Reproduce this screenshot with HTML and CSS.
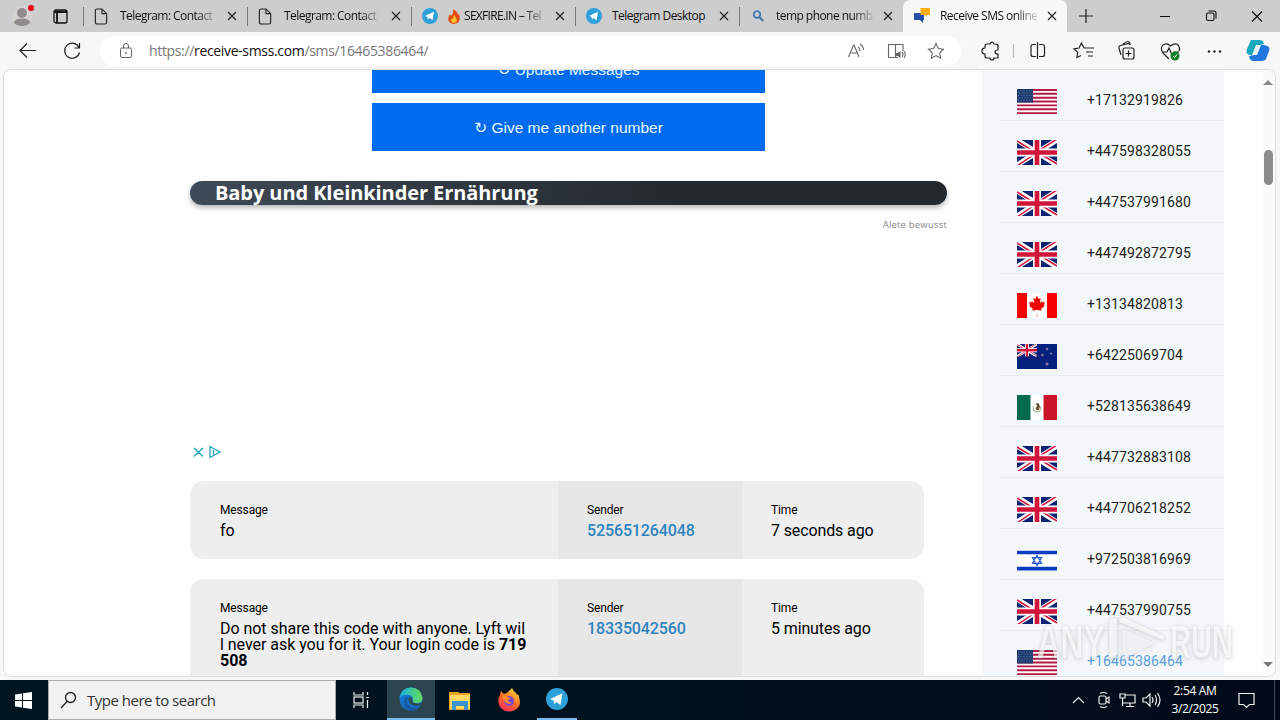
FILE: index.html
```html
<!DOCTYPE html>
<html lang="en">
<head>
<meta charset="utf-8">
<title>Receive SMS online</title>
<link rel="stylesheet" href="styles.css">
</head>
<body>
<svg class="defs" aria-hidden="true">
  <symbol id="x" viewBox="0 0 10 10"><path d="M1 1l8 8M9 1l-8 8" fill="none" stroke="#222" stroke-width="1.2"/></symbol>
  <symbol id="doc" viewBox="0 0 14 18"><path d="M1 3q0-2 2-2h5l5 5v9q0 2-2 2H3q-2 0-2-2zM8 1v5h5" fill="none" stroke="#222" stroke-width="1.2"/></symbol>
  <symbol id="tg" viewBox="0 0 16 16"><circle cx="8" cy="8" r="8" fill="#2da0da"/><path d="M3 8l9-4.2-1.500 8.500-3-2.200-1.600 1.500-.4-2.600z" fill="#fff"/></symbol>
  <symbol id="uk" viewBox="0 0 40 25" preserveAspectRatio="none"><path fill="#0a2472" d="M0 0h40v25H0z"/><path d="M0 0l40 25M40 0L0 25" stroke="#fff" stroke-width="5"/><path d="M0 1l17 10.500M40-1L22 10.500M0 26l17-11.500M40 24L23 13.500" stroke="#d0143a" stroke-width="1.500"/><path d="M20 0v25M0 12.500h40" stroke="#fff" stroke-width="8"/><path d="M20 0v25M0 12.500h40" stroke="#d0143a" stroke-width="4.700"/></symbol>
  <symbol id="us" viewBox="0 0 40 25"><path fill="#fff" d="M0 0h40v25H0z"/><path d="M0 1h40M0 4.800h40M0 8.700h40M0 12.500h40M0 16.400h40M0 20.200h40M0 24.100h40" stroke="#b31942" stroke-width="1.900"/><path fill="#1d3a70" d="M0 0h16v13.500H0z"/><path d="M1 2h14M2 4.300h14M1 6.600h14M2 8.900h14M1 11.200h14" stroke="#7d92bb" stroke-width=".8" stroke-dasharray="1 1.700"/></symbol>
  <symbol id="ca" viewBox="0 0 40 25"><path fill="#fff" d="M0 0h40v25H0z"/><path fill="#f50000" d="M0 0h10v25H0zM30 0h10v25H30zM20 3l1.800 3 1.800-1-.7 5.200 2.300-2.300.5 1.500 2.300-.4-1 3 .8.800-3.600 3 .3 1.900-3.900-.6h-1.200l-3.900.6.3-1.900-3.600-3 .8-.8-1-3 2.300.4.5-1.500 2.300 2.300-.7-5.200 1.800 1z"/><path d="M20 21v3" stroke="#e99"/></symbol>
  <symbol id="nz" viewBox="0 0 40 25"><path fill="#04207d" d="M0 0h40v25H0z"/><use href="#uk" width="20" height="12.500"/><g fill="#a84a78" stroke="#8f9bd0" stroke-width=".6"><circle cx="30" cy="5" r="1"/><circle cx="25.500" cy="11" r="1"/><circle cx="34" cy="9.500" r=".8"/><circle cx="30" cy="20" r="1.200"/></g></symbol>
  <symbol id="mx" viewBox="0 0 40 25"><path fill="#fff" d="M0 0h40v25H0z"/><path fill="#006b4d" d="M0 0h13.500v25H0z"/><path fill="#cc1428" d="M26.500 0H40v25H26.500z"/><path d="M16.500 11.500a3.800 3.800 0 1 0 7 0" fill="none" stroke="#a9b897" stroke-width="1.200"/><path d="M19 8.500l2.500-.5 1.500 3.500-1.200 3.500h-2.300l-1-2 1.500-1.500z" fill="#665031"/></symbol>
  <symbol id="il" viewBox="0 0 40 25"><path fill="#fff" d="M0 2h40v21H0z"/><path d="M0 4.500h40M0 20.700h40" stroke="#0d3cc0" stroke-width="3.700"/><path d="M20 7.500l4.600 7.800h-9.200zM20 17.500l4.600-7.800h-9.200z" fill="none" stroke="#2459c8" stroke-width="1.200"/></symbol>
</svg>

<div class="tabs">
  <div class="tabs-lead">
    <svg width="24" height="24" viewBox="0 0 24 24"><circle cx="10" cy="12" r="10" fill="#d5d2cf"/><circle cx="10" cy="9" r="5" fill="#8f8c8a"/><path d="M2 19q0-4.500 8-4.500t8 4.500q-3 3-8 3t-8-3z" fill="#8f8c8a"/><circle cx="19" cy="4" r="3" fill="#e3000f"/></svg>
    <svg width="15" height="15" viewBox="0 0 15 15"><rect x="1" y="1" width="13" height="13" rx="2" fill="none" stroke="#111" stroke-width="1.300"/><path d="M1 3h13M4 3v11" stroke="#111" stroke-width="1.800"/></svg>
  </div>
  <div class="tab"><svg class="fav doc"><use href="#doc"/></svg><span class="fade">Telegram: Contact</span><svg class="close"><use href="#x"/></svg></div>
  <div class="tab"><svg class="fav doc"><use href="#doc"/></svg><span class="fade">Telegram: Contact</span><svg class="close"><use href="#x"/></svg></div>
  <div class="tab"><svg class="fav"><use href="#tg"/></svg><span class="fade fire"><svg width="12" height="15" viewBox="0 0 12 15"><path d="M5 0q5 3 5 6l1-1q3 9-5 10Q-1 14 .5 8L2 5l1 2q3-3 2-7z" fill="#e64b12"/><path d="M6 6q3 3 3 6-3 4-6 0 0-2 1-3l1 1z" fill="#ffc529"/></svg>SEXFIRE.IN – Tel</span><svg class="close"><use href="#x"/></svg></div>
  <div class="tab"><svg class="fav"><use href="#tg"/></svg><span>Telegram Desktop</span><svg class="close"><use href="#x"/></svg></div>
  <div class="tab"><svg class="fav" viewBox="0 0 16 16"><circle cx="7" cy="6.500" r="3.300" fill="none" stroke="#3c76b4" stroke-width="1.700"/><path d="M9.300 9l4 4" stroke="#3c76b4" stroke-width="2"/></svg><span class="fade">temp phone numb</span><svg class="close"><use href="#x"/></svg></div>
  <div class="tab active"><svg class="fav" viewBox="0 0 16 16"><path d="M0 5h10v7H9v3l-3-3H0z" fill="#2450a8"/><path d="M6.500 0H16v7h-3v2l-2-2H6.500z" fill="#ffad0b"/></svg><span class="fade">Receive SMS online</span><svg class="close"><use href="#x"/></svg></div>
  <svg class="plus" viewBox="0 0 14 14"><path d="M7 0v14M0 7h14" stroke="#222" stroke-width="1.200"/></svg>
  <svg class="wctl" viewBox="0 0 104 12"><path d="M0 6.500h10M92 1.500l10 10M102 1.500l-10 10" stroke="#111" stroke-width="1.100" fill="none"/><g fill="none" stroke="#111" stroke-width="1.100"><rect x="46.500" y="3" width="7.500" height="7.500" rx="1.500"/><path d="M48.500 1h5.500q2 0 2 2v5.500"/></g></svg>
</div>

<div class="toolbar">
  <svg class="nav" width="66" height="20" viewBox="0 0 66 20"><g fill="none" stroke="#222" stroke-width="1.200"><path d="M17 9.500H1.500M8 2.500l-7 7 7 7"/><path d="M60 6.500a7.500 7.500 0 1 0 .5 5M60.500 2v5h-5"/></g></svg>
  <div class="address">
    <svg width="14" height="18" viewBox="0 0 14 18"><g fill="none" stroke="#666"><rect x="1.500" y="6" width="11" height="9.500" rx="1.500"/><path d="M4.500 6V4a2.500 2.500 0 0 1 5 0v2"/></g><circle cx="7" cy="11" r=".9" fill="#666"/></svg>
    <span class="url">https://<b>receive-smss.com</b>/sms/16465386464/</span>
    <svg width="96" height="18" viewBox="0 0 96 18"><g fill="none" stroke="#666" stroke-width="1.100"><path d="M.5 15L5.500 3h.5l5 12M2.500 11h7M10 5q2 1 2 4M12 2q3.500 2 3.500 6"/><path d="M47.500 16V2.500h-7v13H50M47.500 2.500h7.500V9"/><path d="M54 10q2 2 0 5M56 9q2.500 3 0 7"/><path d="M88 1.500l2.400 5 5.100.700-3.800 3.700 1 5.300-4.700-2.600-4.700 2.600 1-5.300-3.800-3.700 5.100-.700z"/></g><path d="M47.500 11h2l3-2v7l-3-2h-2z" fill="#666"/></svg>
  </div>
  <svg class="tools" width="300" height="28" viewBox="0 0 300 28"><g fill="none" stroke="#222" stroke-width="1.200">
    <path d="M17 8q-1-1-4-1-1-3-3.500-1-.8.500-.5 1H6q-2 0-2 2v2q-3 0-3 3t3 3v2q0 2 2 2h3q0 2 2 2t2-2h4v-4q-3 0-3-2t3-2z" transform="translate(1 0)"/>
    <path d="M33.500 7v14" stroke="#bbb"/><path d="M56 7.500h-3q-2 0-2 2v8q0 2 2 2h3M59 7.500h3.500q2 0 2 2v8q0 2-2 2H59M57.500 5v17"/>
    <path d="M108 11h-3l-2.500-5-2.500 5-5 .8 3.700 3.600-.8 5.100 4-2M107 11h8M107 15h7M109 19h5" transform="translate(-1 0)"/>
    <g transform="translate(6 0)"><rect x="137" y="11" width="11" height="11" rx="2"/><path d="M142.500 13.500v6M139.500 16.500h6M135 18l-2-7q-.5-2 1.500-2.500l7-1.800q2-.4 3 1.300M137 7q6-5 7 0"/></g>
    <path d="M183 15h4l2-4 3 7 2-3h5M189 22l-6-6q-3-4-.5-7.500 4-3.500 8 .5 5-4 8-.5 2 3 .5 5.500"/>
  </g><circle cx="195" cy="19" r="4.500" fill="#14822b"/><path d="M193 19l1.500 1.500L197 17.500" fill="none" stroke="#fff"/>
  <g fill="#222"><circle cx="229" cy="14.500" r="1.200"/><circle cx="234.500" cy="14.500" r="1.200"/><circle cx="240" cy="14.500" r="1.200"/></g>
  <g transform="translate(6 0)"><path d="M265 3h9q3 0 4 4l-4 1-3 10h-6q-6 0-4-6z" fill="#1aa8bc"/><path d="M276 24h-9q-3 0-4-5l5-1 3-10h7q7 1 5 6l-3 8q-1 2-4 2z" fill="#2176df"/><path d="M270 8h5l-4 10h-5z" fill="#e7f5fb"/></g></svg>
</div>

<div class="view">
  <main class="main">
    <div class="btn">↻ Update Messages</div>
    <div class="btn">↻ Give me another number</div>
    <div class="banner">Baby und Kleinkinder Ernährung</div>
    <div class="caption"><span>Alete bewusst</span></div>
    <svg class="adc" width="28" height="14" viewBox="0 0 28 14"><g fill="none" stroke="#20a7bd" stroke-width="1.300"><path d="M1 3l9 8.500M10 3l-9 8.500M17 1.500v11l10-5.500zM20.500 5v5"/></g></svg>
    <section class="card"><div class="c1"><label>Message</label><p>fo</p></div><div class="c2"><label>Sender</label><p><a>525651264048</a></p></div><div class="c3"><label>Time</label><p>7 seconds ago</p></div></section>
    <section class="card tall"><div class="c1"><label>Message</label><p>Do not share this code with anyone. Lyft wil<br>l never ask you for it. Your login code is <b>719<br>508</b></p></div><div class="c2"><label>Sender</label><p><a>18335042560</a></p></div><div class="c3"><label>Time</label><p>5 minutes ago</p></div></section>
  </main>
  <aside class="side">
    <div class="num"><svg><use href="#us"/></svg>+17132919826</div>
    <div class="num"><svg><use href="#uk"/></svg>+447598328055</div>
    <div class="num"><svg><use href="#uk"/></svg>+447537991680</div>
    <div class="num"><svg><use href="#uk"/></svg>+447492872795</div>
    <div class="num"><svg><use href="#ca"/></svg>+13134820813</div>
    <div class="num"><svg><use href="#nz"/></svg>+64225069704</div>
    <div class="num"><svg><use href="#mx"/></svg>+528135638649</div>
    <div class="num"><svg><use href="#uk"/></svg>+447732883108</div>
    <div class="num"><svg><use href="#uk"/></svg>+447706218252</div>
    <div class="num"><svg><use href="#il"/></svg>+972503816969</div>
    <div class="num"><svg><use href="#uk"/></svg>+447537990755</div>
    <div class="num current"><svg><use href="#us"/></svg>+16465386464</div>
  </aside>
  <div class="scroll"><i class="up"></i><i class="thumb"></i><i class="down"></i></div>
</div>

<div class="taskbar">
  <div class="start"><svg width="17" height="17" viewBox="0 0 17 17"><path d="M0 2.500L7 1.500v6.500H0zM8 1.300L17 0v8H8zM0 9h7v6.500l-7-1zM8 9h9v8l-9-1.300z" fill="#fff"/></svg></div>
  <div class="search"><svg width="18" height="18" viewBox="0 0 18 18"><g fill="none" stroke="#222" stroke-width="1.300"><circle cx="10.500" cy="6.500" r="5"/><path d="M7 10.500L1 17"/></g></svg><span>Type here to search</span></div>
  <div class="app"><svg width="18" height="18" viewBox="0 0 18 18"><g fill="none" stroke="#eee" stroke-width="1.200"><path d="M2 1v3h9V1M2 17v-3h9v3"/><rect x="2" y="6" width="9" height="6"/><path d="M15.500 1v3M15.500 9v8M14 6.500h3"/></g></svg></div>
  <div class="app on"><svg width="24" height="24" viewBox="0 0 24 24"><defs><linearGradient id="eg" x2="1"><stop stop-color="#1ab1e7"/><stop offset="1" stop-color="#63dc54"/></linearGradient></defs><circle cx="12" cy="12" r="11.500" fill="#1875ce"/><path d="M.6 11Q2 .5 12 .5T23.500 11q0 5-6 5-4 0-4-2 1-5-3-6Q4 7 .6 11z" fill="url(#eg)"/><path d="M9 10q-3 8 4 10 5 2 9-1-5 6-12 4-6-3-5-9 1-4 4-4z" fill="#145aa4"/><path d="M10 10q3-.5 3.300 2 0 4 4 4.500 3 .5 6-1l-1 2.500q-4 2-8 .5-5-2-4.800-6z" fill="#294b57"/></svg></div>
  <div class="app"><svg width="22" height="19" viewBox="0 0 22 19"><path d="M0 1h9l2 1h10v17H0z" fill="#e6a221"/><path d="M1 4h20v14H1z" fill="#ffd864"/><path d="M3 10h16v9h-4v-4H7v4H3z" fill="#3d93cf"/></svg></div>
  <div class="app"><svg width="22" height="24" viewBox="0 0 22 24"><defs><linearGradient id="ff" x1=".8" x2=".2" y2="1"><stop stop-color="#ffe23a"/><stop offset=".5" stop-color="#ff6b26"/><stop offset="1" stop-color="#f52b62"/></linearGradient></defs><path d="M14 0q1 3 4 5l1 2 1-1q5 12-3 16-8 4-14-2-5-6-1-13l1-4 3 3 3-1 2-2z" fill="url(#ff)"/><circle cx="11" cy="13" r="5" fill="#7745d6"/><path d="M4 8q4-2 6 1l3 1-3 2q0 3 4 2-3 4-7 0-2-2-3-6z" fill="#ff8a28"/></svg></div>
  <div class="app run"><svg width="22" height="22"><use href="#tg"/></svg></div>
  <svg class="tray" width="90" height="20" viewBox="0 0 90 20"><g fill="none" stroke="#eee" stroke-width="1.200"><path d="M1 13l5.500-5.500L12 13"/><rect x="27" y="6" width="7" height="8" rx="1.500"/><path d="M34 9l3-2v6l-3-2M28 3.500q3.500-2 7 0M28 16.500q3.500 2 7 0"/><path d="M53 5h10v8H50.500V9M58 13v3M54 16.500h8M48 4h5v4h-5zM50.500 8v8"/><path d="M71 8h3l4-4v12l-4-4h-3zM80 7q2 3 0 6M83 5q3 5 0 10M85.500 3q5 7 0 14"/></g></svg>
  <div class="clock">2:54 AM<br>3/2/2025</div>
  <svg class="note" width="17" height="17" viewBox="0 0 17 17"><path d="M1 1.500h15v11h-4.500l-3 3-3-3H1z" fill="none" stroke="#eee" stroke-width="1.200"/></svg>
  <i class="peek"></i>
</div>

<svg class="mark" width="200" height="54" viewBox="0 0 200 54"><g fill="#fff" fill-opacity=".68" stroke="#c9ccd0" stroke-opacity=".45" stroke-width=".7"><text x="1" y="42" textLength="68" lengthAdjust="spacingAndGlyphs">ANY</text><text x="134" y="42" textLength="63" lengthAdjust="spacingAndGlyphs">RUN</text><path d="M73 42V6q0-4 4-4h4v40zM83 2l4-1 40 18q3 2 0 5L83 6z"/><path d="M86 12l34 15-34 17z" fill-opacity=".3"/></g></svg>
</body>
</html>
```

FILE: styles.css
```css
* { box-sizing: border-box; }
body { margin: 0; width: 1280px; height: 720px; overflow: hidden; display: flex; flex-direction: column; background: #f7f7f7; font-family: "Open Sans", "Noto Sans", sans-serif; position: relative; }
svg { flex: none; display: block; }
.defs { position: absolute; width: 0; height: 0; }
.tabs { height: 32px; flex: none; background: #cdcdcd; display: flex; align-items: center; font-size: 12px; color: #111; }
.tabs-lead { width: 83px; display: flex; align-items: center; gap: 17px; padding-left: 12px; }
.tab { width: 164px; height: 32px; flex: none; display: flex; align-items: center; position: relative; padding-left: 11px; }
.tab::before { content: ""; position: absolute; left: 0; top: 7px; width: 1px; height: 19px; background: #777; }
.tab.active { background: #f7f7f7; border-radius: 7px 7px 0 0; }
.tab.active::before { display: none; }
.fav { width: 16px; height: 16px; margin-right: 10px; }
.fav.doc { width: 14px; height: 17px; margin-right: 12px; }
.tab span { width: 97px; height: 20px; line-height: 20px; overflow: hidden; white-space: nowrap; letter-spacing: -.55px; }
.tab .fade { -webkit-mask-image: linear-gradient(90deg, #000 78%, #0002); mask-image: linear-gradient(90deg, #000 78%, #0002); }
.fire { display: flex; align-items: center; gap: 4px; }
.tab .fire { letter-spacing: -.7px; }
.close { width: 10px; height: 10px; margin-left: 10px; }
.plus { width: 14px; height: 14px; margin-left: 12px; }
.wctl { width: 104px; height: 12px; margin-left: 67px; }
.toolbar { height: 37px; flex: none; display: flex; align-items: center; padding-left: 19px; }
.nav { margin-right: 15px; }
.address { width: 864px; height: 30px; border-radius: 15px; background: #fff; display: flex; align-items: center; padding: 0 17px 0 19px; }
.url { font-size: 14px; color: #777; margin-left: 16px; flex: 1; white-space: nowrap; letter-spacing: -.34px; }
.url b { font-weight: 400; color: #111; }
.tools { margin-left: 19px; }
.view { width: 1273px; height: 608px; margin: 0 4px 3px 3px; flex: none; border: 1px solid #dedede; border-radius: 8px; background: #fefefe; overflow: hidden; display: flex; font-family: Roboto, sans-serif; }
.main { width: 757px; margin-left: 186px; flex: none; display: flex; flex-direction: column; }
.btn { width: 393px; height: 48px; margin: 0 0 10px 182px; flex: none; background: #006bef; color: #e8f8ff; font: 15.500px/50px "Liberation Sans", "DejaVu Sans", sans-serif; text-align: center; }
.btn:first-child { margin-top: -25px; }
.banner { height: 24px; margin-top: 20px; flex: none; border-radius: 12px; background: linear-gradient(100deg, #3e4a57, #24292d 65%); color: #fff; font: 700 20px/24px "Open Sans", sans-serif; letter-spacing: -.08px; padding-left: 25px; box-shadow: 0 3px 5px #0004; }
.caption { height: 8px; margin-top: 16px; flex: none; overflow: hidden; text-align: right; font: 9.500px/7px "Open Sans", sans-serif; color: #888; }
.caption span { display: block; letter-spacing: .2px; }
.adc { margin: 216px 0 22px 3px; }
.card { width: 734px; height: 78px; flex: none; border-radius: 14px; overflow: hidden; background: #eee; display: flex; margin-bottom: 20px; color: #000; }
.card.tall { height: 115px; }
.card > div { padding: 22px 0 0 30px; }
.card label { display: block; font-size: 12px; line-height: 14px; letter-spacing: -.15px; }
.card p { margin: 6px 0 0; font-size: 16px; line-height: 16px; white-space: nowrap; letter-spacing: -.04px; }
.c1 { width: 368px; }
.c2 { width: 184px; background: #e7e7e7; }
.card > .c2, .card > .c3 { padding-left: 29px; }
.c2 p, .c3 p { letter-spacing: -.12px; }
.card a { color: #2f83be; font-weight: 500; }
.side { width: 242px; margin-left: 35px; padding-left: 18px; flex: none; background: #f4f7f9; }
.num { height: 51px; border-bottom: 1px solid #e9ecee; display: flex; align-items: flex-start; padding: 19px 0 0 17px; font-size: 14px; line-height: 23px; letter-spacing: .12px; color: #222; }
.num svg { width: 40px; height: 25px; margin-right: 30px; }
.current { color: #5a9fe0; }
.scroll { margin-left: auto; width: 14px; display: flex; flex-direction: column; align-items: center; padding: 10px 0 9px; background: #fbfbfb; }
.up { border: 5px solid transparent; border-top: 0; border-bottom-color: #888; }
.down { border: 5px solid transparent; border-bottom: 0; border-top-color: #777; margin-top: auto; }
.thumb { width: 9px; height: 35px; border-radius: 5px; background: #8c8c8c; margin-top: 65px; }
.taskbar { height: 40px; flex: none; display: flex; align-items: center; background: linear-gradient(90deg, #001722, #020a19); color: #fff; }
.start { width: 48px; padding-left: 15px; }
.search { width: 288px; height: 40px; border: 1px solid #aaa; background: #f2f2f2; display: flex; align-items: center; padding-left: 11px; gap: 9px; color: #333; font-size: 15px; letter-spacing: -.5px; }
.app { width: 49px; height: 40px; display: flex; align-items: center; justify-content: center; }
.app.on { width: 48px; background: #2c4650; border-bottom: 2px solid #79b8ee; margin-left: 2px; }
.app.run { border-bottom: 2px solid #79b8ee; width: 40px; margin-left: 4px; }
.tray { margin-left: auto; }
.clock { width: 58px; text-align: center; font-size: 12px; line-height: 18px; letter-spacing: -.35px; margin-left: 4px; white-space: nowrap; }
.note { margin-left: 14px; }
.peek { width: 1px; height: 40px; background: #445; margin: 0 5px 0 19px; }
.mark { position: absolute; left: 1036px; top: 616px; font: 700 46px "Liberation Sans", sans-serif; filter: drop-shadow(0 1px 2px #0003); }
```
